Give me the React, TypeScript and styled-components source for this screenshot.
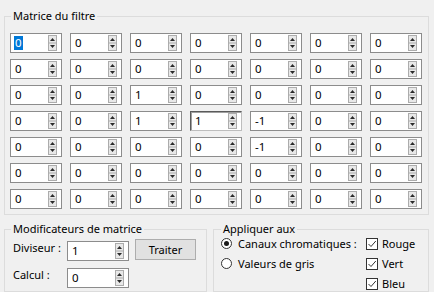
import React from 'react';
import styled, { createGlobalStyle, css } from 'styled-components';

const Global = createGlobalStyle`
  html, body { margin: 0; padding: 0; background: #f0f0f0; }
  body { font-family: "Noto Sans", "Segoe UI", sans-serif; font-size: 11px; color: #000; }
`;

const Window = styled.div`
  width: 434px;
  height: 292px;
  box-sizing: border-box;
  padding: 8px 5px 0 4px;
  display: flex;
  flex-direction: column;
  gap: 6px;
  overflow: hidden;
  background: #f0f0f0;
`;

const Group = styled.fieldset<{ $w: number }>`
  margin: 0;
  padding: 0;
  min-width: 0;
  box-sizing: border-box;
  border: 1px solid #dcdcdc;
  width: ${(p) => p.$w}px;
`;

const Legend = styled.legend<{ $ml: number }>`
  padding: 0 2px;
  margin-left: ${(p) => p.$ml}px;
  line-height: 16px;
  height: 16px;
  font-size: 11px;
`;

const MatrixGrid = styled.div`
  display: grid;
  grid-template-columns: repeat(7, 52px);
  grid-auto-rows: 20px;
  column-gap: 8px;
  row-gap: 6px;
  padding: 9px 0 5px 5px;
`;

const SpinBox = styled.div<{ $focused?: boolean; $w?: number }>`
  box-sizing: border-box;
  width: ${(p) => p.$w ?? 52}px;
  height: 20px;
  background: #fff;
  border: 1px solid #8c8c8c;
  display: flex;
  align-items: center;
  padding: 0 4px 0 4px;
  ${(p) =>
    p.$focused &&
    css`
      border-color: #5a5a5a #bdbdbd #bdbdbd #5a5a5a;
      box-shadow: inset 1px 1px 0 #a0a0a0;
    `}
`;

const Value = styled.span`
  flex: 1;
  line-height: 14px;
  font-size: 11.5px;
`;

const Selected = styled.span`
  background: #0078d7;
  color: #fff;
  padding: 0 1px;
  margin-left: -1px;
  line-height: 14px;
  display: inline-block;
`;

const Spin = () => (
  <svg width="9" height="16" viewBox="0 0 9 16">
    <rect x="0.5" y="0.5" width="8" height="15" fill="#e8e8e8" stroke="#acacac" />
    <line x1="0.5" y1="8" x2="8.5" y2="8" stroke="#acacac" />
    <path d="M2 6 L4.5 3 L7 6 Z" fill="#2a2a2a" />
    <path d="M2 10 L4.5 13 L7 10 Z" fill="#2a2a2a" />
  </svg>
);

const BottomRow = styled.div`
  display: flex;
  gap: 6px;
  flex: 1;
`;

const ModGrid = styled.div`
  display: grid;
  grid-template-columns: 54px 62px auto;
  grid-auto-rows: 20px;
  row-gap: 7px;
  padding: 4px 0 0 8px;
  align-items: start;
`;

const FieldLabel = styled.span`
  line-height: 16px;
  margin-top: -1px;
`;

const Button = styled.button`
  box-sizing: border-box;
  margin: -2px 0 0 6px;
  width: 61px;
  height: 21px;
  padding: 0;
  background: #e1e1e1;
  border: 1px solid #adadad;
  font-family: inherit;
  font-size: 11px;
  color: #000;
`;

const ApplyGrid = styled.div`
  display: grid;
  grid-template-columns: 145px auto;
  grid-auto-rows: 13px;
  row-gap: 7px;
  padding: 0 0 0 7px;
`;

const Option = styled.label<{ $gap: number }>`
  display: flex;
  align-items: center;
  gap: ${(p) => p.$gap}px;
  line-height: 13px;
  white-space: nowrap;
`;

const Radio = styled.span<{ $on?: boolean }>`
  box-sizing: border-box;
  width: 11px;
  height: 11px;
  border-radius: 50%;
  border: 1px solid #333;
  background: #fff;
  display: flex;
  align-items: center;
  justify-content: center;
  &::after {
    content: '';
    width: 5px;
    height: 5px;
    border-radius: 50%;
    background: ${(p) => (p.$on ? '#1a1a1a' : 'transparent')};
  }
`;

const Check = () => (
  <svg width="12" height="12" viewBox="0 0 12 12">
    <rect x="0.5" y="0.5" width="11" height="11" fill="#fff" stroke="#333" />
    <path d="M2.5 6 L5 8.5 L9.8 3" fill="none" stroke="#333" strokeWidth="1" />
  </svg>
);

const matrix = [
  ['0', '0', '0', '0', '0', '0', '0'],
  ['0', '0', '0', '0', '0', '0', '0'],
  ['0', '0', '1', '0', '0', '0', '0'],
  ['0', '0', '1', '1', '-1', '0', '0'],
  ['0', '0', '0', '0', '-1', '0', '0'],
  ['0', '0', '0', '0', '0', '0', '0'],
  ['0', '0', '0', '0', '0', '0', '0'],
];

export default function App() {
  return (
    <>
      <Global />
      <Window>
        <Group $w={425}>
          <Legend $ml={6}>Matrice du filtre</Legend>
          <MatrixGrid>
            {matrix.map((row, r) =>
              row.map((v, c) => (
                <SpinBox key={`${r}-${c}`} $focused={r === 3 && c === 3}>
                  <Value>{r === 0 && c === 0 ? <Selected>{v}</Selected> : v}</Value>
                  <Spin />
                </SpinBox>
              ))
            )}
          </MatrixGrid>
        </Group>
        <BottomRow>
          <Group $w={203}>
            <Legend $ml={6}>Modificateurs de matrice</Legend>
            <ModGrid>
              <FieldLabel>Diviseur :</FieldLabel>
              <SpinBox $w={62}>
                <Value>1</Value>
                <Spin />
              </SpinBox>
              <Button>Traiter</Button>
              <FieldLabel>Calcul :</FieldLabel>
              <SpinBox $w={62}>
                <Value>0</Value>
                <Spin />
              </SpinBox>
            </ModGrid>
          </Group>
          <Group $w={216}>
            <Legend $ml={7}>Appliquer aux</Legend>
            <ApplyGrid>
              <Option $gap={6}>
                <Radio $on />
                Canaux chromatiques :
              </Option>
              <Option $gap={4}>
                <Check />
                Rouge
              </Option>
              <Option $gap={6}>
                <Radio />
                Valeurs de gris
              </Option>
              <Option $gap={4}>
                <Check />
                Vert
              </Option>
              <span />
              <Option $gap={4}>
                <Check />
                Bleu
              </Option>
            </ApplyGrid>
          </Group>
        </BottomRow>
      </Window>
    </>
  );
}
